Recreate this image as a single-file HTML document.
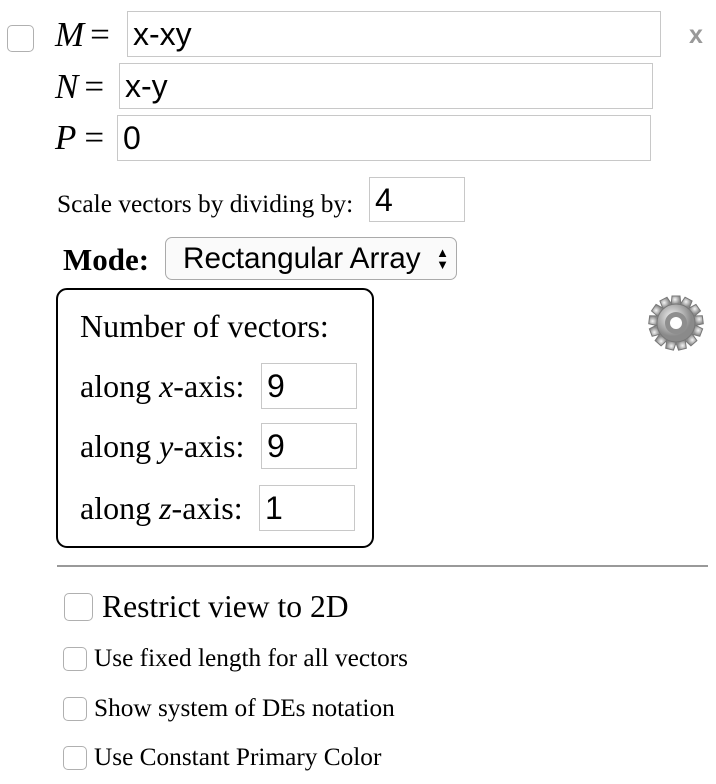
<!DOCTYPE html>
<html><head><meta charset="utf-8"><style>
body{margin:0;width:716px;height:784px;background:#fff;font-family:"Liberation Serif",serif;color:#000;position:relative;overflow:hidden}
.a{position:absolute;line-height:1;white-space:nowrap}
.inp{position:absolute;border:1px solid #c8c8c8;box-sizing:border-box;font-family:"Liberation Sans",sans-serif;font-size:32px;padding-left:5px;line-height:44px}
.cb{position:absolute;border:1px solid #b0b0b0;border-radius:5px;box-sizing:border-box;background:#fff}
.lbl{position:absolute;font-size:35px;font-style:italic;white-space:nowrap;line-height:1}
.lbl span{font-style:normal}
</style></head><body>
<div class="cb" style="left:7px;top:25px;width:27px;height:27px"></div>
<div class="lbl" style="left:55px;top:17px">M<span style="margin-left:6px">=</span></div>
<div class="inp" style="left:127px;top:11px;width:534px;height:46px">x-xy</div>
<div class="lbl" style="left:55px;top:69px">N<span style="margin-left:6px">=</span></div>
<div class="inp" style="left:119px;top:63px;width:534px;height:46px">x-y</div>
<div class="lbl" style="left:55px;top:120px">P<span style="margin-left:8px">=</span></div>
<div class="inp" style="left:117px;top:115px;width:534px;height:46px">0</div>
<div class="a" style="left:689px;top:23px;font-family:'Liberation Sans',sans-serif;font-weight:bold;font-size:25px;color:#999">x</div>
<div class="a" style="left:57px;top:192px;font-size:25.4px">Scale vectors by dividing by:</div>
<div class="inp" style="left:369px;top:177px;width:96px;height:45px">4</div>
<div class="a" style="left:63px;top:244px;font-size:31px;font-weight:bold">Mode:</div>
<div class="a" style="left:165px;top:237px;width:292px;height:43px;border:1px solid #aaa;border-radius:7px;box-sizing:border-box;background:#fafafa;font-family:'Liberation Sans',sans-serif;font-size:29.7px;line-height:41px;padding-left:17px">Rectangular Array<span style="position:absolute;right:7px;font-size:13px;line-height:12px;top:9px">▲<br>▼</span></div>
<div class="a" style="left:56px;top:288px;width:318px;height:260px;border:2px solid #000;border-radius:11px;box-sizing:border-box"></div>
<div class="a" style="left:80px;top:310px;font-size:32px">Number of vectors:</div>
<div class="a" style="left:80px;top:370px;font-size:32px">along <i>x</i>-axis:</div>
<div class="inp" style="left:261px;top:363px;width:96px;height:46px">9</div>
<div class="a" style="left:80px;top:430px;font-size:32px">along <i>y</i>-axis:</div>
<div class="inp" style="left:261px;top:423px;width:96px;height:46px">9</div>
<div class="a" style="left:80px;top:492px;font-size:32px">along <i>z</i>-axis:</div>
<div class="inp" style="left:259px;top:485px;width:96px;height:46px">1</div>
<svg class="a" style="left:647px;top:294px" width="58" height="58" viewBox="0 0 58 58">
<defs><radialGradient id="g" cx="40%" cy="35%"><stop offset="0" stop-color="#f4f4f4"/><stop offset="1" stop-color="#8a8a8a"/></radialGradient></defs>
<g fill="url(#g)" stroke="#777" stroke-width="1">
<g id="t"><path d="M25 2 L33 2 L34 12 L24 12 Z"/></g>
<use href="#t" transform="rotate(27.7 29 29)"/><use href="#t" transform="rotate(55.4 29 29)"/><use href="#t" transform="rotate(83.1 29 29)"/><use href="#t" transform="rotate(110.8 29 29)"/><use href="#t" transform="rotate(138.5 29 29)"/><use href="#t" transform="rotate(166.2 29 29)"/><use href="#t" transform="rotate(193.8 29 29)"/><use href="#t" transform="rotate(221.5 29 29)"/><use href="#t" transform="rotate(249.2 29 29)"/><use href="#t" transform="rotate(276.9 29 29)"/><use href="#t" transform="rotate(304.6 29 29)"/><use href="#t" transform="rotate(332.3 29 29)"/>
<circle cx="29" cy="29" r="19"/>
</g>
<circle cx="29" cy="29" r="11" fill="#8e8e8e"/>
<circle cx="29" cy="29" r="6" fill="#fff"/>
</svg>
<div class="a" style="left:57px;top:565px;width:651px;height:2px;background:#999"></div>
<div class="cb" style="left:64px;top:593px;width:29px;height:28px"></div>
<div class="a" style="left:102px;top:591px;font-size:31.6px">Restrict view to 2D</div>
<div class="cb" style="left:63px;top:647px;width:24px;height:24px"></div>
<div class="a" style="left:94px;top:646px;font-size:25.3px">Use fixed length for all vectors</div>
<div class="cb" style="left:63px;top:697px;width:24px;height:24px"></div>
<div class="a" style="left:94px;top:696px;font-size:25.3px">Show system of DEs notation</div>
<div class="cb" style="left:63px;top:746px;width:24px;height:24px"></div>
<div class="a" style="left:94px;top:745px;font-size:25.3px">Use Constant Primary Color</div>
</body></html>
